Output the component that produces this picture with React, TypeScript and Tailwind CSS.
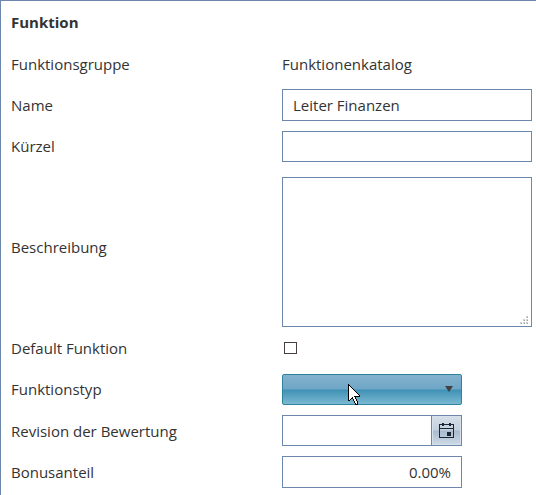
import type { ReactNode } from "react";

function Row({ label, className, labelClass = "", children }: { label: string; className: string; labelClass?: string; children: ReactNode }) {
  return (
    <div className={`flex items-center ${className}`}>
      <span className={`w-[271px] shrink-0 ${labelClass}`}>{label}</span>
      {children}
    </div>
  );
}

function CalendarIcon() {
  return (
    <svg width="15" height="16" viewBox="0 0 15 16" shapeRendering="crispEdges" className="mr-px mb-px text-[#1d2733]">
      <path d="M.5 2.5h14v13H.5zM.5 6.5h14" fill="none" stroke="currentColor" strokeWidth="1" />
      <path d="M3 1h2v3H3zM10 1h2v3h-2zM8 10h4v4H8z" fill="currentColor" />
    </svg>
  );
}

function ResizeGrip() {
  return (
    <svg width="8" height="8" viewBox="0 0 8 8" shapeRendering="crispEdges" fill="#d0d0d0">
      <path d="M6 0h2v2H6zM3 3h2v2H3zM6 3h2v2H6zM0 6h2v2H0zM3 6h2v2H3zM6 6h2v2H6z" />
      <path d="M7 1h1v1H7zM4 4h1v1H4zM7 4h1v1H7zM1 7h1v1H1zM4 7h1v1H4zM7 7h1v1H7z" fill="#a2a2a2" />
    </svg>
  );
}

function Pointer() {
  return (
    <svg width="13" height="21" viewBox="0 0 13 21" shapeRendering="crispEdges" className="absolute left-[65px] top-[9px]">
      <path d="M.5 .5v16h1l3-3 3 6.5h2v-2l-2.500-5.500h4.500v-1z" fill="#fff" stroke="#000" strokeWidth="1" />
    </svg>
  );
}

export default function App() {
  return (
    <div className="h-[495px] w-[536px] overflow-hidden border-t border-l border-[#6b87ab] bg-white pl-[10px] font-['Open_Sans',sans-serif] text-[15px] leading-5 text-[#333]">
      <h1 className="mt-[11px] h-5 font-bold">Funktion</h1>
      <Row label="Funktionsgruppe" className="mt-[22px] h-5">
        <span>Funktionenkatalog</span>
      </Row>
      <Row label="Name" className="mt-[15px] h-8">
        <div className="flex h-8 w-[250px] items-center border border-[#6b87ab] px-[10px]">Leiter Finanzen</div>
      </Row>
      <Row label="Kürzel" className="mt-[10px] h-[31px]" labelClass="pb-0.5">
        <div className="h-[31px] w-[250px] border border-[#6b87ab]" />
      </Row>
      <Row label="Beschreibung" className="mt-[15px] h-[150px]" labelClass="pb-[10px]">
        <div className="flex h-[150px] w-[250px] items-end justify-end border border-[#6b87ab] pr-[3px] pb-[2px]">
          <ResizeGrip />
        </div>
      </Row>
      <Row label="Default Funktion" className="mt-[11px] h-5">
        <span className="ml-[2px] h-3 w-[13px] border border-[#484040]" />
      </Row>
      <Row label="Funktionstyp" className="mt-4 h-[31px]" labelClass="pb-0.5">
        <div className="relative flex h-[31px] w-[180px] items-center justify-end rounded-[2px] border border-[#2f829b] bg-[linear-gradient(#83b2ce_0%,#6fa6c6_48%,#3f91b5_52%,#7bb9d2_100%)] pr-2">
          <svg width="8" height="6" viewBox="0 0 8 6" className="mb-px">
            <path d="M0 0h8L4 6z" fill="#414141" />
          </svg>
          <Pointer />
        </div>
      </Row>
      <Row label="Revision der Bewertung" className="mt-[10px] h-[31px]">
        <div className="flex h-[31px] w-[180px] border border-[#6b87ab]">
          <div className="w-[149px] border-r border-[#6b87ab]" />
          <div className="flex grow items-center justify-center border border-[#d6e1ec] bg-[linear-gradient(#d5dee7_0%,#c3d0dd_48%,#a9bbcd_52%,#cbd8e5_100%)]">
            <CalendarIcon />
          </div>
        </div>
      </Row>
      <Row label="Bonusanteil" className="mt-[10px] h-8">
        <div className="flex h-8 w-[180px] items-center justify-end border border-[#6b87ab] px-[10px]">0.00%</div>
      </Row>
    </div>
  );
}
